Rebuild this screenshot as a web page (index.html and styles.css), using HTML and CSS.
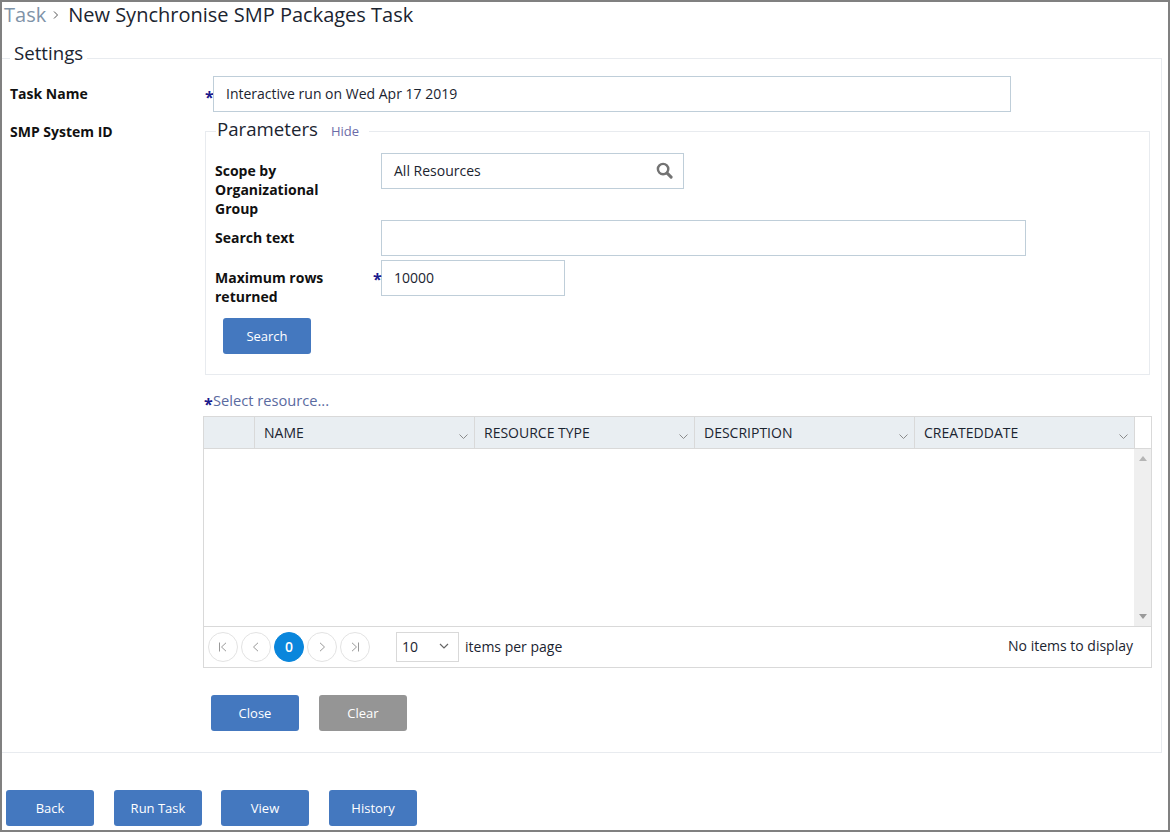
FILE: index.html
```html
<!DOCTYPE html>
<html lang="en">
<head>
<meta charset="utf-8">
<title>New Synchronise SMP Packages Task</title>
<link rel="stylesheet" href="styles.css">
</head>
<body>
<div class="frame">
  <h1 class="crumbs"><span class="crumb-root">Task</span><svg class="crumb-sep" width="6" height="10" viewBox="0 0 6 10"><path d="M1 1.5 4.5 5 1 8.5" fill="none" stroke="#555" stroke-width="1"/></svg><span>New Synchronise SMP Packages Task</span></h1>
  <fieldset class="settings">
    <legend class="settings-legend">Settings</legend>
    <div class="row row-name">
      <label class="label">Task Name</label>
      <div class="field-wrap"><span class="req">*</span><div class="input input-name">Interactive run on Wed Apr 17 2019</div></div>
    </div>
    <div class="row row-smp">
      <label class="label label-smp">SMP System ID</label>
      <div class="smp-col">
        <fieldset class="params">
          <legend class="params-legend"><span class="params-title">Parameters</span><a class="hide">Hide</a></legend>
          <div class="param-row param-scope">
            <label class="param-label">Scope by Organizational Group</label>
            <div class="input input-scope"><span>All Resources</span>
              <svg width="17" height="17" viewBox="0 0 18 18"><circle cx="7.5" cy="7.5" r="5.5" fill="none" stroke="#737373" stroke-width="2.6"/><path d="M11.8 11.8 16 16" stroke="#737373" stroke-width="3.2" stroke-linecap="round"/></svg>
            </div>
          </div>
          <div class="param-row param-text">
            <label class="param-label">Search text</label>
            <div class="input input-text"></div>
          </div>
          <div class="param-row param-max">
            <label class="param-label">Maximum rows returned</label>
            <div class="max-wrap"><span class="req req-max">*</span><div class="input input-max">10000</div></div>
          </div>
          <button class="btn btn-search">Search</button>
        </fieldset>
        <div class="select-title"><span class="req req-sel">*</span>Select resource...</div>
        <div class="grid">
          <div class="grid-head">
            <div class="th th-first"></div>
            <div class="th">NAME<svg class="sort" width="9" height="5" viewBox="0 0 9 5"><path d="M.5 .5 4.500 4.500 8.500 .5" fill="none" stroke="#8a8a8a"/></svg></div>
            <div class="th">RESOURCE TYPE<svg class="sort" width="9" height="5" viewBox="0 0 9 5"><path d="M.5 .5 4.500 4.500 8.500 .5" fill="none" stroke="#8a8a8a"/></svg></div>
            <div class="th">DESCRIPTION<svg class="sort" width="9" height="5" viewBox="0 0 9 5"><path d="M.5 .5 4.500 4.500 8.500 .5" fill="none" stroke="#8a8a8a"/></svg></div>
            <div class="th">CREATEDDATE<svg class="sort" width="9" height="5" viewBox="0 0 9 5"><path d="M.5 .5 4.500 4.500 8.500 .5" fill="none" stroke="#8a8a8a"/></svg></div>
            <div class="th-end"></div>
          </div>
          <div class="grid-body">
            <div class="scrollbar">
              <svg width="8" height="5" viewBox="0 0 8 5"><path d="M4 0 8 5H0Z" fill="#b5b5b5"/></svg>
              <svg width="8" height="5" viewBox="0 0 8 5"><path d="M4 5 8 0H0Z" fill="#9a9a9a"/></svg>
            </div>
          </div>
          <div class="grid-foot">
            <div class="pager">
              <span class="page-btn"><svg width="10" height="10" viewBox="0 0 10 10"><path d="M1.500 .5V9.500M8 .8 3.500 5 8 9.200" fill="none" stroke="#999"/></svg></span>
              <span class="page-btn"><svg width="10" height="10" viewBox="0 0 10 10"><path d="M7 .8 2.500 5 7 9.200" fill="none" stroke="#999"/></svg></span>
              <span class="page-btn page-current">0</span>
              <span class="page-btn"><svg width="10" height="10" viewBox="0 0 10 10"><path d="M3 .8 7.500 5 3 9.200" fill="none" stroke="#999"/></svg></span>
              <span class="page-btn"><svg width="10" height="10" viewBox="0 0 10 10"><path d="M8.500 .5V9.500M2 .8 6.500 5 2 9.200" fill="none" stroke="#999"/></svg></span>
            </div>
            <div class="page-size"><span>10</span><svg width="10" height="6" viewBox="0 0 10 6"><path d="M1 1 5 5 9 1" fill="none" stroke="#666" stroke-width="1.200"/></svg></div>
            <span class="per-page">items per page</span>
            <span class="no-items">No items to display</span>
          </div>
        </div>
        <div class="form-actions">
          <button class="btn">Close</button>
          <button class="btn btn-disabled">Clear</button>
        </div>
      </div>
    </div>
  </fieldset>
  <div class="page-actions">
    <button class="btn">Back</button>
    <button class="btn">Run Task</button>
    <button class="btn">View</button>
    <button class="btn">History</button>
  </div>
</div>
</body>
</html>
```
FILE: styles.css
```css
* { box-sizing: border-box; }
html, body { margin: 0; padding: 0; }
body { font-family: "Open Sans", "Liberation Sans", sans-serif; font-size: 14px; color: #1b2430; background: #fff; }
.frame { width: 1170px; height: 832px; border: 2px solid #808080; overflow: hidden; background: #fff; }

.crumbs { margin: 0; padding: 0 0 0 2px; height: 24px; display: flex; align-items: center; font-size: 20px; font-weight: 400; line-height: 27px; color: #1b2430; }
.crumb-root { color: #7f93a8; }
.crumb-sep { margin: 2px 9px 0 7px; }

.settings { margin: 15px 0 0; padding: 0; width: 1160px; height: 712px; border: 0; border-top: 1px solid #e8ebef; border-bottom: 1px solid #e8ebef; border-right: 1px solid #e8ebef; }
.settings-legend { margin-left: 8px; padding: 0 4px 10px; font-size: 18.67px; line-height: 24px; }

.row { display: flex; }
.label { width: 202px; flex: none; padding-left: 8px; font-weight: 700; font-size: 14px; line-height: 19px; color: #111; }
.row-name { height: 36px; margin-top: 1px; align-items: center; }
.row-name .label { margin-bottom: 2px; }
.field-wrap { display: flex; align-items: center; margin-left: 1px; }
.req { color: #1a1a8c; font-weight: 700; font-size: 16px; line-height: 14px; width: 8px; margin-top: 6px; }
.input { border: 1px solid #bfced9; background: #fff; height: 36px; display: flex; align-items: center; padding: 0 0 2px 12px; font-size: 14px; color: #1b2430; }
.input-name { width: 798px; }

.label-smp { padding-top: 10px; }
.smp-col { width: 948px; margin-left: -1px; }

.params { margin: 5px 0 0 2px; padding: 0 0 0 9px; width: 945px; height: 258px; border: 1px solid #e8ebef; }
.params-legend { margin-left: 1px; padding: 0 10px 4px 1px; display: flex; align-items: baseline; }
.params-title { font-size: 18.67px; line-height: 24px; }
.hide { font-size: 13px; color: #6b6ba8; margin-left: 13px; }

.param-row { display: flex; }
.param-label { width: 166px; flex: none; padding-right: 40px; font-weight: 700; font-size: 14px; line-height: 19px; color: #111; }
.param-scope { height: 67px; margin-top: 8px; }
.param-scope .param-label { padding-top: 8px; }
.input-scope { width: 303px; justify-content: space-between; padding-right: 10px; }
.param-text { height: 40px; }
.param-text .param-label { padding-top: 8px; }
.input-text { width: 645px; }
.param-max { height: 58px; }
.param-max .param-label { padding-top: 8px; }
.max-wrap { display: flex; position: relative; }
.req-max { position: absolute; left: -8px; top: 12px; margin: 0; }
.input-max { width: 184px; }

.btn { width: 88px; height: 36px; border: 0; border-radius: 3px; background: #4478bf; color: #fff; font-family: inherit; font-size: 13px; padding: 0; }
.btn-search { margin-left: 8px; }
.btn-disabled { background: #959595; }

.select-title { margin: 14px 0 0 1px; height: 27px; font-size: 14.67px; line-height: 22px; color: #5a6aa0; display: flex; }
.req-sel { margin-top: 8px; width: 9px; }

.grid { width: 949px; height: 252px; border: 1px solid #d9d9d9; }
.grid-head { display: flex; height: 32px; border-bottom: 1px solid #d9d9d9; }
.th { position: relative; width: 220px; flex: none; background: #e9eef2; border-right: 1px solid #d9d9d9; padding-left: 9px; line-height: 31px; font-size: 14px; color: #1b2430; }
.th-first { width: 51px; padding: 0; }
.th-end { flex: 1; }
.sort { position: absolute; right: 6px; top: 17px; }

.grid-body { height: 178px; display: flex; justify-content: flex-end; border-bottom: 1px solid #d9d9d9; }
.scrollbar { width: 17px; background: #efefef; display: flex; flex-direction: column; justify-content: space-between; align-items: center; padding: 7px 0; }
.scrollbar svg { display: block; }

.grid-foot { display: flex; align-items: center; height: 40px; padding: 0 18px 0 5px; }
.pager { display: flex; gap: 3px; flex: none; width: 188px; margin-left: -1px; }
.page-btn { width: 30px; height: 30px; border: 1px solid #e3e3e3; border-radius: 50%; display: flex; align-items: center; justify-content: center; background: #fff; }
.page-current { background: #0a86dc; border-color: #0a86dc; color: #fff; font-weight: 600; font-size: 14px; padding-bottom: 2px; }
.page-size { width: 63px; height: 30px; border: 1px solid #d9d9d9; display: flex; align-items: center; justify-content: space-between; padding: 0 9px 2px 5px; color: #1b2430; flex: none; }
.per-page { margin-left: 6px; margin-bottom: 2px; }
.no-items { margin-left: auto; margin-bottom: 3px; }

.form-actions { display: flex; gap: 20px; margin: 27px 0 0 8px; }

.page-actions { display: flex; margin: 37px 0 0 4px; }
.page-actions .btn { margin-right: 20px; }
.page-actions .btn:nth-child(2) { margin-right: 19px; }
```
